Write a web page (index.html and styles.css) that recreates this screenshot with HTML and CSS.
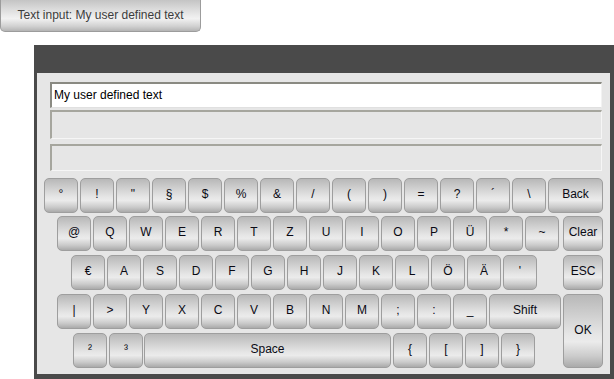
FILE: index.html
```html
<!DOCTYPE html>
<html>
<head>
<meta charset="utf-8">
<link rel="stylesheet" href="styles.css">
</head>
<body>
<div class="topbtn">Text input: My user defined text</div>
<div class="frame">
  <div class="inner">
    <div class="fields">
      <div class="field field-main">My user defined text</div>
      <div class="field field-2"></div>
      <div class="field field-3"></div>
    </div>
    <div class="keyboard">
      <div class="row row1">
        <div class="key">°</div><div class="key">!</div><div class="key">"</div><div class="key">§</div><div class="key">$</div><div class="key">%</div><div class="key">&amp;</div><div class="key">/</div><div class="key">(</div><div class="key">)</div><div class="key">=</div><div class="key">?</div><div class="key">´</div><div class="key">\</div>
        <div class="key key-back">Back</div>
      </div>
      <div class="lower">
        <div class="leftcol">
          <div class="row row2">
            <div class="key">@</div><div class="key">Q</div><div class="key">W</div><div class="key">E</div><div class="key">R</div><div class="key">T</div><div class="key">Z</div><div class="key">U</div><div class="key">I</div><div class="key">O</div><div class="key">P</div><div class="key">Ü</div><div class="key">*</div><div class="key">~</div>
          </div>
          <div class="row row3">
            <div class="key">€</div><div class="key">A</div><div class="key">S</div><div class="key">D</div><div class="key">F</div><div class="key">G</div><div class="key">H</div><div class="key">J</div><div class="key">K</div><div class="key">L</div><div class="key">Ö</div><div class="key">Ä</div><div class="key">'</div>
          </div>
          <div class="row row4">
            <div class="key">|</div><div class="key">&gt;</div><div class="key">Y</div><div class="key">X</div><div class="key">C</div><div class="key">V</div><div class="key">B</div><div class="key">N</div><div class="key">M</div><div class="key">;</div><div class="key">:</div><div class="key">_</div>
            <div class="key key-shift">Shift</div>
          </div>
          <div class="row row5">
            <div class="key">²</div><div class="key">³</div>
            <div class="key key-space">Space</div>
            <div class="key">{</div><div class="key">[</div><div class="key">]</div><div class="key">}</div>
          </div>
        </div>
        <div class="rightcol">
          <div class="key key-side">Clear</div>
          <div class="key key-side">ESC</div>
          <div class="key key-side key-ok">OK</div>
        </div>
      </div>
    </div>
  </div>
</div>
</body>
</html>
```

FILE: styles.css
```css
html, body {
  margin: 0;
  padding: 0;
  background: #ffffff;
  font-family: "Liberation Sans", Arial, sans-serif;
  font-size: 12px;
  overflow: hidden;
}

.topbtn {
  width: 199px;
  height: 30px;
  border: 1px solid #9c9c9c;
  border-top: none;
  border-radius: 0 0 5px 5px;
  background: linear-gradient(to bottom, #c4c4c4 0%, #dcdcdc 30%, #f2f2f2 60%, #d0d0d0 85%, #b4b4b4 100%);
  color: #3c3c3c;
  display: flex;
  align-items: center;
  justify-content: center;
  padding-bottom: 1px;
  box-sizing: content-box;
}

.frame {
  margin: 13px 0 0 34px;
  width: 573px;
  height: 301px;
  background: #4a4a4a;
  padding: 28px 4px 6px 3px;
}

.inner {
  background: #e6e6e6;
  height: 301px;
  padding: 9px 7px 0 7px;
  box-sizing: border-box;
}

.fields {
  margin: 0 1px 0 6px;
  display: flex;
  flex-direction: column;
}

.field {
  box-sizing: border-box;
  border-style: solid;
  border-width: 2px 1px 1px 2px;
  border-color: #a6a69e #f6f6f6 #f6f6f6 #a6a69e;
  background: #e6e6e6;
  height: 27px;
  line-height: 22px;
  padding-left: 2px;
  color: #000;
}

.field-main {
  background: #ffffff;
  border-color: #8a8a82 #f2f2f2 #e0e0e0 #8a8a82;
  height: 26px;
  margin-bottom: 2px;
}

.field-2 {
  height: 29px;
  margin-bottom: 5px;
}

.field-3 {
  height: 27px;
}

.keyboard {
  margin-top: 7px;
}

.row {
  display: flex;
  gap: 2px;
}

.row2, .row4 {
  padding-left: 13px;
}

.row3 {
  padding-left: 27px;
}

.row5 {
  padding-left: 29px;
}

.lower {
  display: flex;
  margin-top: 3px;
  gap: 2px;
}

.leftcol {
  width: 517px;
  display: flex;
  flex-direction: column;
  gap: 4px;
}

.rightcol {
  width: 40px;
  display: flex;
  flex-direction: column;
  gap: 4px;
}

.key {
  box-sizing: border-box;
  width: 34px;
  height: 35px;
  border: 1px solid #9e9e9e;
  border-radius: 5px;
  background: linear-gradient(to bottom, #b8b8b8 0%, #cdcdcd 25%, #e6e6e6 55%, #ebebeb 65%, #cbcbcb 85%, #aaaaaa 100%);
  color: #0a0a14;
  display: flex;
  align-items: center;
  justify-content: center;
  padding-bottom: 3px;
  flex: none;
}

.key-back {
  width: 55px;
  margin-left: auto;
}

.key-shift {
  width: 72px;
}

.key-space {
  width: 247px;
  margin-left: -1px;
}

.key-side {
  width: 40px;
}

.key-ok {
  height: 74px;
  padding-bottom: 2px;
}
```
